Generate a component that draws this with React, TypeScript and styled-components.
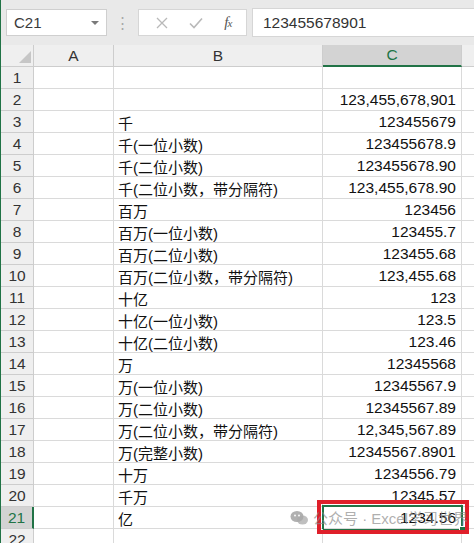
import React from 'react';
import styled, { createGlobalStyle } from 'styled-components';

const GlobalStyle = createGlobalStyle`
  html, body {
    margin: 0;
    padding: 0;
    height: 100%;
    overflow: hidden;
    background: #ffffff;
  }
  body {
    font-family: "Liberation Sans", "Noto Sans CJK SC", sans-serif;
  }
`;

const GREEN = '#217346';
const GRID = '#dadada';
const HEAD_LINE = '#cdcdcd';

const Window = styled.div`
  position: relative;
  width: 474px;
  height: 543px;
  overflow: hidden;
  border-left: 1px solid ${GREEN};
  box-sizing: border-box;
  background: #fff;
`;

/* ---------- formula bar ---------- */

const Toolbar = styled.div`
  display: flex;
  align-items: center;
  height: 45px;
  padding-left: 5px;
  background: #e9e9e9;
  box-sizing: border-box;
`;

const NameBox = styled.div`
  display: flex;
  align-items: center;
  justify-content: space-between;
  width: 101px;
  height: 27px;
  padding: 0 7px 0 7px;
  box-sizing: border-box;
  background: #fff;
  border: 1px solid #cfcfcf;
  font-size: 15px;
  color: #3a3a3a;
`;

const Caret = styled.span`
  width: 0;
  height: 0;
  border-left: 4px solid transparent;
  border-right: 4px solid transparent;
  border-top: 4px solid #7a7a7a;
`;

const Grip = styled.div`
  width: 31px;
  text-align: center;
  color: #a8a8a8;
  font-size: 15px;
  line-height: 1;
`;

const FxBox = styled.div`
  display: flex;
  align-items: center;
  justify-content: space-around;
  width: 109px;
  height: 27px;
  padding: 0 4px 0 6px;
  box-sizing: border-box;
  background: #fff;
  border: 1px solid #d6d6d6;
`;

const FxLabel = styled.span`
  font-family: "Liberation Serif", "DejaVu Serif", serif;
  font-style: italic;
  font-size: 15px;
  color: #555;
  letter-spacing: -1px;

  small {
    font-size: 11px;
  }
`;

const FormulaInput = styled.div`
  display: flex;
  align-items: center;
  flex: 1;
  height: 27px;
  margin-left: 5px;
  margin-right: -10px;
  padding-left: 10px;
  background: #fff;
  border: 1px solid #d6d6d6;
  font-size: 15.5px;
  color: #333;
`;

/* ---------- sheet ---------- */

const Sheet = styled.div`
  display: grid;
  grid-template-columns: 33px 80px 209px 139px 40px;
  grid-auto-rows: 22px;
`;

const Corner = styled.div`
  display: flex;
  align-items: flex-end;
  justify-content: flex-end;
  padding: 0 2px 3px 0;
  box-sizing: border-box;
  background: #efefef;
  border-right: 1px solid ${HEAD_LINE};
  border-bottom: 1px solid ${HEAD_LINE};
`;

const CornerMark = styled.span`
  width: 0;
  height: 0;
  border-left: 12px solid transparent;
  border-bottom: 12px solid #c6c6c6;
`;

const ColHead = styled.div<{ $active?: boolean }>`
  display: flex;
  align-items: center;
  justify-content: center;
  box-sizing: border-box;
  font-size: 15.5px;
  background: ${(p) => (p.$active ? '#d3d3d3' : '#efefef')};
  color: ${(p) => (p.$active ? GREEN : '#333')};
  border-right: 1px solid ${HEAD_LINE};
  border-bottom: ${(p) => (p.$active ? `2px solid ${GREEN}` : `1px solid ${HEAD_LINE}`)};
`;

const RowHead = styled.div<{ $active?: boolean }>`
  display: flex;
  align-items: center;
  justify-content: center;
  box-sizing: border-box;
  font-size: 15.5px;
  padding-top: 1px;
  background: ${(p) => (p.$active ? '#d3d3d3' : '#efefef')};
  color: ${(p) => (p.$active ? GREEN : '#333')};
  border-right: ${(p) => (p.$active ? `2px solid ${GREEN}` : `1px solid ${HEAD_LINE}`)};
  border-bottom: 1px solid ${HEAD_LINE};
`;

const Cell = styled.div<{ $num?: boolean; $selected?: boolean }>`
  position: relative;
  display: flex;
  align-items: center;
  justify-content: ${(p) => (p.$num ? 'flex-end' : 'flex-start')};
  padding: ${(p) => (p.$num ? '1px 5px 0 0' : '1px 0 0 4px')};
  box-sizing: border-box;
  white-space: nowrap;
  font-size: ${(p) => (p.$num ? '15.5px' : '15px')};
  color: #111;
  border-right: 1px solid ${GRID};
  border-bottom: 1px solid ${GRID};

  ${(p) =>
    p.$selected &&
    `
    &::after {
      content: '';
      position: absolute;
      left: -1px;
      top: -2px;
      right: -2px;
      bottom: -3px;
      border: 2px solid ${GREEN};
    }
  `}
`;

const FillHandle = styled.span`
  position: absolute;
  right: -5px;
  bottom: -5px;
  width: 5px;
  height: 5px;
  background: ${GREEN};
  border: 1px solid #fff;
  z-index: 2;
`;

const Callout = styled.span`
  position: absolute;
  left: -6px;
  top: -7px;
  right: -8px;
  bottom: -6px;
  border: 4px solid #df1f2a;
  z-index: 3;
`;

const Watermark = styled.div`
  position: absolute;
  left: 289px;
  top: 507px;
  display: flex;
  align-items: center;
  gap: 4px;
  font-size: 15px;
  color: rgba(140, 140, 140, 0.7);
  white-space: nowrap;
  pointer-events: none;
  z-index: 4;
`;

const rows: [string, string][] = [
  ['', ''],
  ['', '123,455,678,901'],
  ['千', '123455679'],
  ['千(一位小数)', '123455678.9'],
  ['千(二位小数)', '123455678.90'],
  ['千(二位小数，带分隔符)', '123,455,678.90'],
  ['百万', '123456'],
  ['百万(一位小数)', '123455.7'],
  ['百万(二位小数)', '123455.68'],
  ['百万(二位小数，带分隔符)', '123,455.68'],
  ['十亿', '123'],
  ['十亿(一位小数)', '123.5'],
  ['十亿(二位小数)', '123.46'],
  ['万', '12345568'],
  ['万(一位小数)', '12345567.9'],
  ['万(二位小数)', '12345567.89'],
  ['万(二位小数，带分隔符)', '12,345,567.89'],
  ['万(完整小数)', '12345567.8901'],
  ['十万', '1234556.79'],
  ['千万', '12345.57'],
  ['亿', '1234.56'],
  ['', ''],
];

const ACTIVE_ROW = 21;

const CrossIcon = () => (
  <svg width="12" height="12" viewBox="0 0 12 12">
    <path d="M1 1 L11 11 M11 1 L1 11" stroke="#b9b9b9" strokeWidth="1.3" fill="none" />
  </svg>
);

const CheckIcon = () => (
  <svg width="14" height="12" viewBox="0 0 14 12">
    <path d="M1 6.5 L5 10.5 L13 1.5" stroke="#b9b9b9" strokeWidth="1.6" fill="none" />
  </svg>
);

const WeChatIcon = () => (
  <svg width="19" height="16" viewBox="0 0 19 16">
    <ellipse cx="7" cy="6.5" rx="6.5" ry="5.5" fill="rgba(150,150,150,0.75)" />
    <ellipse cx="12.5" cy="10" rx="5.5" ry="4.6" fill="rgba(170,170,170,0.75)" />
    <circle cx="5" cy="5.5" r="0.9" fill="#fff" />
    <circle cx="9" cy="5.5" r="0.9" fill="#fff" />
  </svg>
);

const App: React.FC = () => {
  return (
    <Window>
      <GlobalStyle />
      <Toolbar>
        <NameBox>
          C21
          <Caret />
        </NameBox>
        <Grip>⋮</Grip>
        <FxBox>
          <CrossIcon />
          <CheckIcon />
          <FxLabel>
            f<small>x</small>
          </FxLabel>
        </FxBox>
        <FormulaInput>123455678901</FormulaInput>
      </Toolbar>

      <Sheet>
        <Corner>
          <CornerMark />
        </Corner>
        <ColHead>A</ColHead>
        <ColHead>B</ColHead>
        <ColHead $active>C</ColHead>
        <ColHead />

        {rows.map(([label, value], i) => {
          const n = i + 1;
          const active = n === ACTIVE_ROW;
          return (
            <React.Fragment key={n}>
              <RowHead $active={active}>{n}</RowHead>
              <Cell />
              <Cell>{label}</Cell>
              <Cell $num $selected={active}>
                {value}
                {active && (
                  <>
                    <FillHandle />
                    <Callout />
                  </>
                )}
              </Cell>
              <Cell />
            </React.Fragment>
          );
        })}
      </Sheet>

      <Watermark>
        <WeChatIcon />
        <span>公众号 · Excel学习世界</span>
      </Watermark>
    </Window>
  );
};

export default App;
